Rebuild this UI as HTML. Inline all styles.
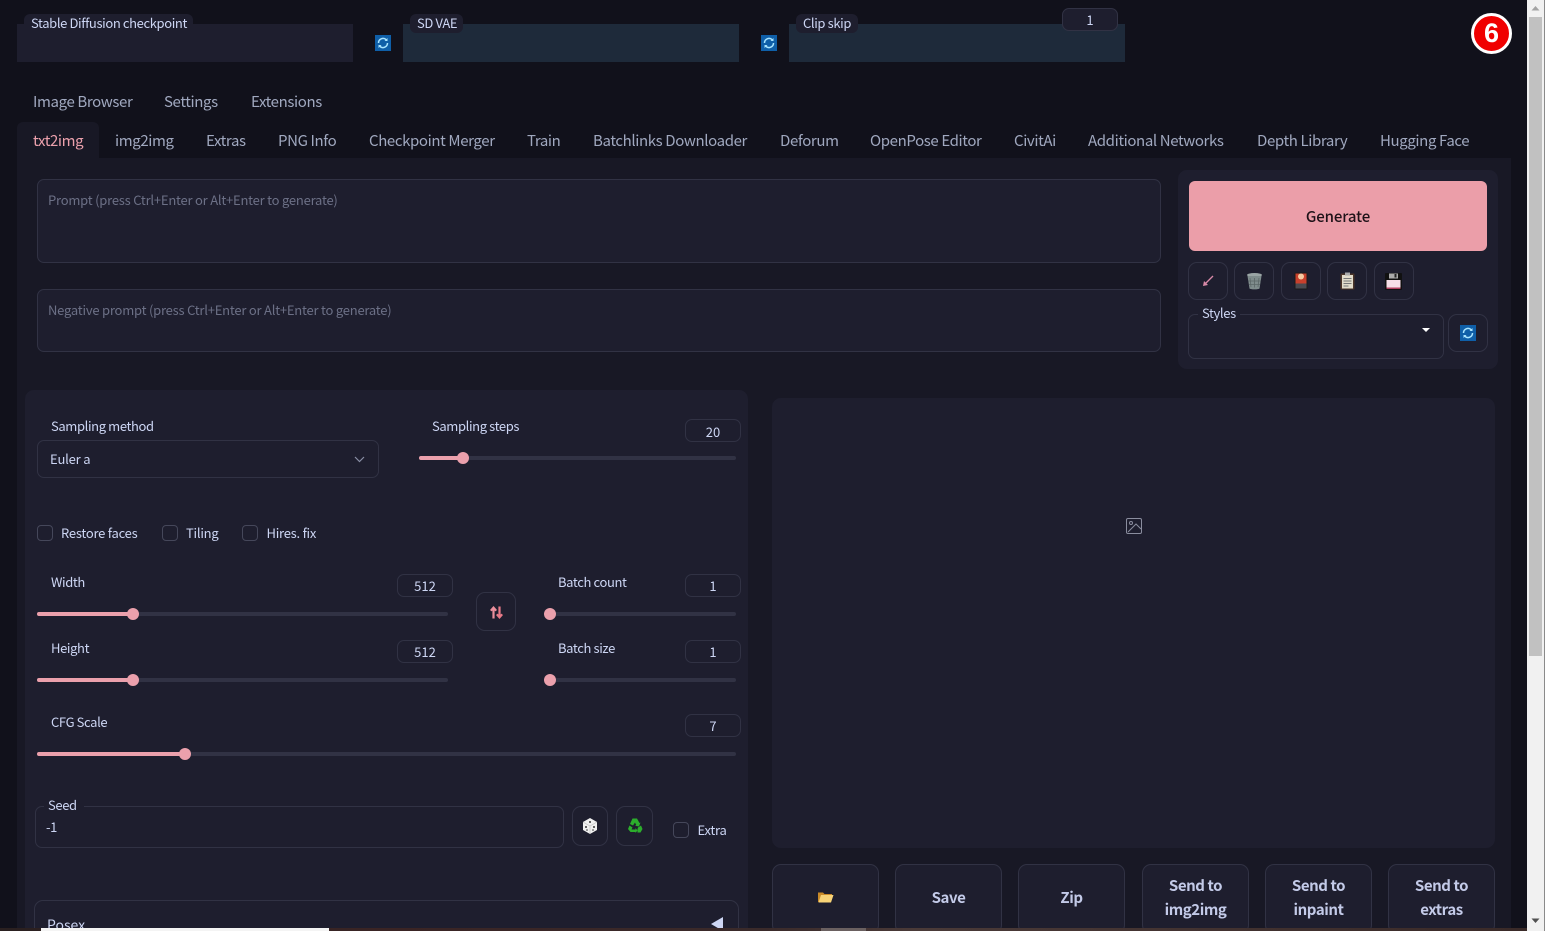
<!DOCTYPE html>
<html><head><meta charset="utf-8"><style>
html,body{margin:0;padding:0;width:1545px;height:931px;overflow:hidden;background:#11111b}
body{position:relative;font-family:"Liberation Sans","Noto Sans CJK JP",sans-serif}
*{box-sizing:border-box}
.b{position:absolute}
.t{position:absolute;white-space:nowrap;line-height:20px;font-family:"Noto Sans CJK JP","Noto Sans CJK SC",sans-serif;color:#cdd6f4;font-size:13px;letter-spacing:-.38px}
.tab{font-size:15px;color:#a0a8bf;line-height:22px;letter-spacing:-.38px}
.ph{color:#6c7086;letter-spacing:-.22px}
.ck{letter-spacing:-.24px}
.in{position:absolute;border:1px solid #313244;border-radius:7px;background:#1e1e2e}
.num{position:absolute;border:1px solid #313244;border-radius:7px;background:#1e1e2e;width:56px;height:23px;text-align:center;font:13px/22px "Noto Sans CJK JP",sans-serif;color:#cdd6f4}
.track{position:absolute;height:4px;background:#313244;border-radius:2px}
.fill{position:absolute;height:4px;background:#eba0ac;border-radius:2px}
.th{position:absolute;width:12px;height:12px;border-radius:50%;background:#eba0ac}
.cb{position:absolute;width:16px;height:16px;border:1px solid #45475a;border-radius:4px;background:#1e1e2e}
.ib{position:absolute;border:1px solid #313244;border-radius:9px;background:#1e1e2e}
.btn{position:absolute;top:864px;height:70px;width:107px;border:1px solid #313244;border-radius:9px;background:#1e1e2e;text-align:center;font:600 15px/24px "Noto Sans CJK JP",sans-serif;letter-spacing:-.42px;color:#c3cae8;display:flex;align-items:center;justify-content:center;padding-bottom:2px}
svg{position:absolute;display:block}
</style></head><body>

<!-- top row -->
<div class="b" style="left:17px;top:24px;width:336px;height:38px;background:#1e1e2e"></div>
<div class="b" style="left:403px;top:24px;width:336px;height:38px;background:#1e2a3a"></div>
<div class="b" style="left:789px;top:24px;width:336px;height:38px;background:#1e2a3a"></div>
<div class="b" style="left:24px;top:14px;width:169px;height:19px;background:#1e1e2e;border-radius:6px"></div>
<div class="b" style="left:410px;top:14px;width:53px;height:19px;background:#1e1e2e;border-radius:6px"></div>
<div class="b" style="left:796px;top:14px;width:62px;height:19px;background:#1e1e2e;border-radius:6px"></div>
<div class="t" style="left:31px;top:13px">Stable Diffusion checkpoint</div>
<div class="t" style="left:417px;top:13px">SD VAE</div>
<div class="t" style="left:803px;top:13px">Clip skip</div>
<div class="num" style="left:1062px;top:8px;background:#1e1e2e">1</div>

<svg style="left:375px;top:35px" width="16" height="16" viewBox="0 0 16 16"><rect width="16" height="16" fill="#0f5fa8"/><path d="M3.500 8a4.500 4.500 0 0 1 7.700-3.200M12.500 8a4.500 4.500 0 0 1-7.700 3.200" fill="none" stroke="#a8e4ff" stroke-width="1.500"/><path d="M12.500 3v3h-3zM3.500 13v-3h3z" fill="#a8e4ff"/></svg>
<svg style="left:761px;top:35px" width="16" height="16" viewBox="0 0 16 16"><rect width="16" height="16" fill="#0f5fa8"/><path d="M3.500 8a4.500 4.500 0 0 1 7.700-3.200M12.500 8a4.500 4.500 0 0 1-7.700 3.200" fill="none" stroke="#a8e4ff" stroke-width="1.500"/><path d="M12.500 3v3h-3zM3.500 13v-3h3z" fill="#a8e4ff"/></svg>

<!-- badge -->
<div class="b" style="left:1471px;top:13px;width:41px;height:41px;border-radius:50%;background:#f00000;border:3px solid #fff;text-align:center;font:bold 27px/34px 'Liberation Sans',sans-serif;color:#fff">6</div>

<!-- tabs -->
<div class="t tab" style="left:33px;top:91px">Image Browser</div>
<div class="t tab" style="left:164px;top:91px">Settings</div>
<div class="t tab" style="left:251px;top:91px">Extensions</div>

<div class="b" style="left:17px;top:158px;width:1494px;height:773px;background:#181825"></div>
<div class="b" style="left:17px;top:122px;width:82px;height:36px;background:#181825;border-radius:6px 6px 0 0"></div>
<div class="t tab" style="left:33px;top:130px;color:#eba0ac">txt2img</div>
<div class="t tab" style="left:115px;top:130px">img2img</div>
<div class="t tab" style="left:206px;top:130px">Extras</div>
<div class="t tab" style="left:278px;top:130px">PNG Info</div>
<div class="t tab" style="left:369px;top:130px">Checkpoint Merger</div>
<div class="t tab" style="left:527px;top:130px">Train</div>
<div class="t tab" style="left:593px;top:130px">Batchlinks Downloader</div>
<div class="t tab" style="left:780px;top:130px">Deforum</div>
<div class="t tab" style="left:870px;top:130px">OpenPose Editor</div>
<div class="t tab" style="left:1014px;top:130px">CivitAi</div>
<div class="t tab" style="left:1088px;top:130px">Additional Networks</div>
<div class="t tab" style="left:1257px;top:130px">Depth Library</div>
<div class="t tab" style="left:1380px;top:130px">Hugging Face</div>

<!-- prompts -->
<div class="in" style="left:37px;top:179px;width:1124px;height:84px"></div>
<div class="t ph" style="left:48px;top:190px">Prompt (press Ctrl+Enter or Alt+Enter to generate)</div>
<div class="in" style="left:37px;top:289px;width:1124px;height:63px"></div>
<div class="t ph" style="left:48px;top:300px">Negative prompt (press Ctrl+Enter or Alt+Enter to generate)</div>

<!-- generate panel -->
<div class="b" style="left:1178px;top:170px;width:320px;height:199px;background:#1e1e2e;border-radius:9px"></div>
<div class="b" style="left:1189px;top:181px;width:298px;height:70px;background:#eb9ea9;border-radius:6px;text-align:center;font:500 15px/71px 'Noto Sans CJK JP',sans-serif;letter-spacing:-.1px;color:#1e1218">Generate</div>

<div class="ib" style="left:1188px;top:262px;width:40px;height:38px"></div>
<div class="ib" style="left:1234px;top:262px;width:40px;height:38px"></div>
<div class="ib" style="left:1281px;top:262px;width:40px;height:38px"></div>
<div class="ib" style="left:1327px;top:262px;width:40px;height:38px"></div>
<div class="ib" style="left:1374px;top:262px;width:40px;height:38px"></div>
<svg style="left:1202px;top:275px" width="12" height="12" viewBox="0 0 12 12"><path d="M11 1L2.500 9.500" fill="none" stroke="#d98aa8" stroke-width="1.300"/><path d="M1 11l1-5 4 4z" fill="#d98aa8"/></svg>
<svg style="left:1246px;top:272px" width="17" height="18" viewBox="0 0 17 18"><ellipse cx="8.500" cy="3" rx="7.500" ry="2" fill="#9aa5a5"/><path d="M1.500 4l2 12.500c1 1.200 9 1.200 10 0l2-12.500z" fill="#7f8c8c"/><path d="M4 6l1 9M8.500 6v9.500M13 6l-1 9M2.500 9h12M3 12.500h11" stroke="#5d6868" stroke-width=".8"/></svg>
<svg style="left:1294px;top:272px" width="14" height="18" viewBox="0 0 14 18"><rect x="0.500" y="0.500" width="13" height="17" rx="1.500" fill="#1a1a1a"/><rect x="1.500" y="1.500" width="11" height="10" fill="#c8402c"/><circle cx="7" cy="4.500" r="3" fill="#f6c9a0"/><rect x="1.500" y="11.500" width="11" height="5" fill="#4a4a50"/></svg>
<svg style="left:1340px;top:272px" width="15" height="18" viewBox="0 0 15 18"><rect x="0.500" y="1.500" width="14" height="16" rx="1" fill="#4a3428"/><rect x="2" y="3" width="11" height="13.500" fill="#e2dccb"/><rect x="5" y="0.500" width="5" height="3" fill="#aaa"/><path d="M3.500 6.500h8M3.500 9h8M3.500 11.500h8M3.500 14h5" stroke="#777" stroke-width="1"/></svg>
<svg style="left:1385px;top:273px" width="17" height="17" viewBox="0 0 17 17"><rect width="17" height="17" rx="1" fill="#111"/><rect x="4" y="0.500" width="9" height="5" fill="#aaa"/><rect x="9.500" y="1" width="2" height="3.500" fill="#222"/><rect x="1.500" y="7" width="14" height="7.500" fill="#f6dfe8"/><rect x="1.500" y="14.500" width="14" height="1.500" fill="#b04060"/></svg>

<div class="in" style="left:1188px;top:314px;width:256px;height:45px"></div>
<div class="b" style="left:1198px;top:308px;width:42px;height:12px;background:#1e1e2e"></div>
<div class="t" style="left:1202px;top:303px">Styles</div>
<svg style="left:1421px;top:327px" width="10" height="6" viewBox="0 0 10 6"><path d="M1 1h8L5 5z" fill="#fff"/></svg>
<div class="ib" style="left:1448px;top:314px;width:40px;height:38px"></div>
<svg style="left:1460px;top:325px" width="16" height="16" viewBox="0 0 16 16"><rect width="16" height="16" fill="#0f5fa8"/><path d="M3.500 8a4.500 4.500 0 0 1 7.700-3.200M12.500 8a4.500 4.500 0 0 1-7.700 3.200" fill="none" stroke="#a8e4ff" stroke-width="1.500"/><path d="M12.500 3v3h-3zM3.500 13v-3h3z" fill="#a8e4ff"/></svg>

<!-- left panel -->
<div class="b" style="left:25px;top:390px;width:723px;height:541px;background:#1e1e2e;border-radius:9px 9px 0 0"></div>

<div class="t" style="left:51px;top:416px">Sampling method</div>
<div class="in" style="left:37px;top:440px;width:342px;height:38px"></div>
<div class="t" style="left:50px;top:449px;letter-spacing:-.2px">Euler a</div>
<svg style="left:354px;top:456px" width="11" height="7" viewBox="0 0 11 7"><path d="M1 1l4.500 4.500L10 1" fill="none" stroke="#8a8fa5" stroke-width="1.200"/></svg>

<div class="t" style="left:432px;top:416px">Sampling steps</div>
<div class="num" style="left:685px;top:419px;line-height:24px">20</div>
<div class="track" style="left:419px;top:456px;width:317px"></div>
<div class="fill" style="left:419px;top:456px;width:44px"></div>
<div class="th" style="left:457px;top:452px"></div>

<div class="cb" style="left:37px;top:525px"></div>
<div class="t ck" style="left:61px;top:523px">Restore faces</div>
<div class="cb" style="left:162px;top:525px"></div>
<div class="t ck" style="left:186px;top:523px">Tiling</div>
<div class="cb" style="left:242px;top:525px"></div>
<div class="t ck" style="left:266.500px;top:523px">Hires. fix</div>

<div class="t" style="left:51px;top:572px">Width</div>
<div class="num" style="left:397px;top:574px">512</div>
<div class="track" style="left:37px;top:612px;width:411px"></div>
<div class="fill" style="left:37px;top:612px;width:96px"></div>
<div class="th" style="left:127px;top:608px"></div>

<div class="t" style="left:51px;top:638px">Height</div>
<div class="num" style="left:397px;top:640px">512</div>
<div class="track" style="left:37px;top:678px;width:411px"></div>
<div class="fill" style="left:37px;top:678px;width:96px"></div>
<div class="th" style="left:127px;top:674px"></div>

<div class="ib" style="left:476px;top:592px;width:40px;height:39px"></div>
<svg style="left:489.500px;top:606px" width="13" height="13" viewBox="0 0 13 13"><path d="M3.500 12.500V2M.8 4.700l2.700-3 2.700 3" fill="none" stroke="#eb8f9c" stroke-width="2.200"/><path d="M9.500.5V11M6.800 8.300l2.700 3 2.700-3" fill="none" stroke="#e87a88" stroke-width="2.200"/></svg>

<div class="t" style="left:558px;top:572px">Batch count</div>
<div class="num" style="left:685px;top:574px">1</div>
<div class="track" style="left:550px;top:612px;width:186px"></div>
<div class="th" style="left:544px;top:608px"></div>

<div class="t" style="left:558px;top:638px">Batch size</div>
<div class="num" style="left:685px;top:640px">1</div>
<div class="track" style="left:550px;top:678px;width:186px"></div>
<div class="th" style="left:544px;top:674px"></div>

<div class="t" style="left:51px;top:712px">CFG Scale</div>
<div class="num" style="left:685px;top:714px">7</div>
<div class="track" style="left:37px;top:752px;width:699px"></div>
<div class="fill" style="left:37px;top:752px;width:148px"></div>
<div class="th" style="left:179px;top:748px"></div>

<div class="in" style="left:35px;top:806px;width:529px;height:42px"></div>
<div class="b" style="left:44px;top:800px;width:40px;height:12px;background:#1e1e2e"></div>
<div class="t" style="left:48px;top:795px">Seed</div>
<div class="t" style="left:46px;top:817px">-1</div>

<div class="ib" style="left:572px;top:806px;width:36px;height:40px"></div>
<svg style="left:582px;top:817px" width="16" height="18" viewBox="0 0 16 18"><path d="M8 1l7 4v8l-7 4-7-4V5z" fill="#f0f0f0"/><path d="M8 9L1 5M8 9l7-4M8 9v8" stroke="#bbb" stroke-width=".6"/><circle cx="8" cy="5" r="1" fill="#333"/><circle cx="4" cy="10" r="1" fill="#333"/><circle cx="12" cy="10" r="1" fill="#333"/><circle cx="5" cy="13" r=".8" fill="#333"/><circle cx="11" cy="13" r=".8" fill="#333"/></svg>
<div class="ib" style="left:616px;top:806px;width:37px;height:40px"></div>
<svg style="left:627px;top:817px" width="16" height="17" viewBox="0 0 16 17"><path d="M5.500 1.500h4.500l2.500 4.500 1-.5-1.500 4-4-.8 1.200-.7L8 5.500 6 8.500 3 7z" fill="#2cae2c"/><path d="M2.500 8.500L5.500 10.500 4.500 12.500H8.500V11l2 2.500-2 2.500v-1H3.500L1 12z" fill="#2cae2c"/><path d="M11 10.500l3-2 1.500 3.500-2 3.500h-3V12z" fill="#2cae2c"/></svg>

<div class="cb" style="left:673px;top:822px"></div>
<div class="t ck" style="left:697.500px;top:820px">Extra</div>

<div class="b" style="left:34px;top:900px;width:705px;height:40px;border:1px solid #313244;border-radius:9px;background:#1e1e2e"></div>
<div class="t" style="left:47px;top:915px;font-size:14px;letter-spacing:0">Posex</div>
<svg style="left:710px;top:917px" width="13" height="14" viewBox="0 0 13 14"><path d="M13 0v14L1 7z" fill="#cdd6f4"/></svg>

<!-- right panel -->
<div class="b" style="left:772px;top:398px;width:723px;height:450px;background:#1e1e2e;border-radius:9px"></div>
<svg style="left:1125px;top:517px" width="18" height="18" viewBox="0 0 18 18"><rect x="1.500" y="1.500" width="15" height="15" rx="1.500" fill="none" stroke="#8a8d9e" stroke-width="1"/><circle cx="6" cy="6" r="1.500" fill="none" stroke="#8a8d9e"/><path d="M3 15l8-8 5 5" fill="none" stroke="#8a8d9e" stroke-width="1"/></svg>

<div class="btn" style="left:772px"><svg style="left:44px;top:26px" width="17" height="14" viewBox="0 0 17 14"><path d="M1 1.500h5l1.500 1.500H15v2H4L2 11H1z" fill="#c98a28"/><path d="M4 4h12.500L14 11.500H1.500z" fill="#f8d377"/></svg></div>
<div class="btn" style="left:895px">Save</div>
<div class="btn" style="left:1018px">Zip</div>
<div class="btn" style="left:1142px">Send to<br>img2img</div>
<div class="btn" style="left:1265px">Send to<br>inpaint</div>
<div class="btn" style="left:1388px">Send to<br>extras</div>

<!-- scrollbar -->
<div class="b" style="left:1527px;top:0;width:18px;height:931px;background:#f1f1f1"></div>
<div class="b" style="left:1529px;top:17px;width:13px;height:639px;background:#c1c1c1"></div>
<div class="b" style="left:1544px;top:0;width:1px;height:931px;background:#8a8a8a"></div>
<svg style="left:1531px;top:5px" width="9" height="6" viewBox="0 0 9 6"><path d="M4.500 1L8.500 5.500H.5z" fill="#a3a3a3"/></svg>
<svg style="left:1531px;top:918px" width="9" height="6" viewBox="0 0 9 6"><path d="M4.500 5L8.500.5H.5z" fill="#505050"/></svg>

<!-- bottom strip -->
<div class="b" style="left:0;top:928px;width:1527px;height:3px;background:linear-gradient(90deg,#2a2020,#3a2424 25%,#3a2a2a 50%,#4a3a38 60%,#3a2a28 100%)"></div>
<div class="b" style="left:41px;top:928px;width:288px;height:3px;background:#f4f4f4"></div>
<div class="b" style="left:821px;top:928px;width:45px;height:3px;background:#6a6060"></div>

</body></html>
